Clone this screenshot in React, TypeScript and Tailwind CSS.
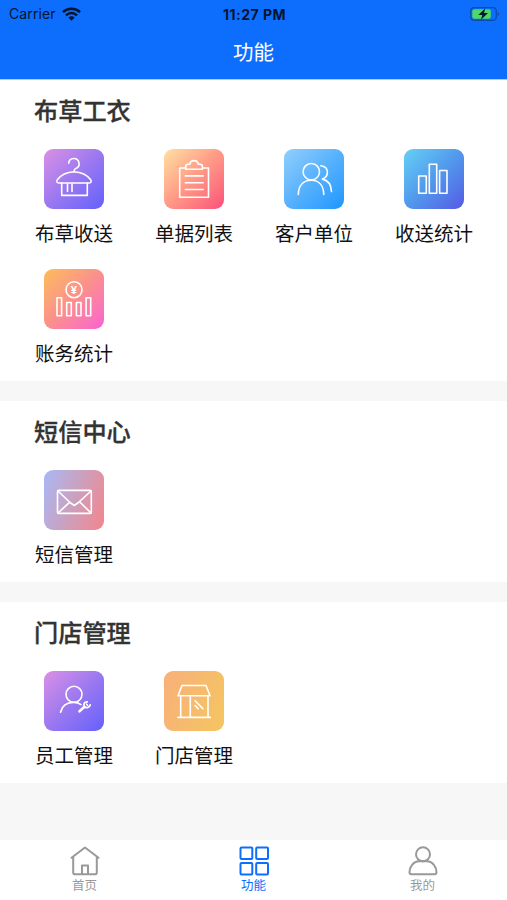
import React from 'react';

interface MenuItem {
  label: string;
  tile: string;
  icon: React.ReactNode;
}

interface MenuSection {
  title: string;
  items: MenuItem[];
}

const HangerIcon = () => (
  <>
    <path d="M24.7 14.2a5.2 5.2 0 1 1 7 5.4c-1.2.5-1.7 1-1.7 3.1" />
    <path d="M30 22.7c-7.5.3-13.5 3.7-16.7 8.1-1 1.6-.4 3.2 1.4 3.2h30.6c1.8 0 2.4-1.6 1.4-3.2C43.5 26.4 37.5 23 30 22.7Z" />
    <path d="M17.7 34v12.4h25.6V34M23.5 35v7.5M28 35v7.5" />
  </>
);

const ClipboardIcon = () => (
  <>
    <path d="M21.5 19H15.7v29.2h28.8V19h-5.8" />
    <path d="M21.7 20.2v-2.5c0-1.6 1-2.4 2.5-2.4h1.5c.4-2.3 2-3.7 4.3-3.7s3.9 1.4 4.3 3.7h1.6c1.5 0 2.5.8 2.5 2.4v2.5Z" />
    <path d="M21.3 26.9h17.9M21.3 33.7h17.9M21.3 40.5h17.9" />
  </>
);

const CustomersIcon = () => (
  <>
    <circle cx="27.3" cy="22.7" r="8.2" />
    <path d="M14.3 45.5c.2-9 5-14.3 13-14.3S39.6 37 39.8 45.5" />
    <path d="M36.8 16.7c4 .5 6.6 3 6.6 6.5 0 3.3-1.7 5.600-5 6.9 5.8 1.3 8.9 6 9.1 12.500" />
  </>
);

const BarsIcon = () => (
  <>
    <rect x="14.7" y="27" width="7.6" height="17.3" />
    <rect x="25.3" y="15.3" width="7.4" height="29" />
    <rect x="35.6" y="21.5" width="7.4" height="22.8" />
  </>
);

const FinanceIcon = () => (
  <>
    <circle cx="30" cy="20.7" r="8" />
    <text x="30" y="24.6" fontSize="11" fontWeight="700" textAnchor="middle" fill="white" stroke="none">¥</text>
    <rect x="13" y="28.7" width="4.6" height="18" />
    <rect x="22.7" y="33.5" width="4.6" height="13.2" />
    <rect x="32.4" y="33.5" width="4.6" height="13.2" />
    <rect x="42.1" y="28.7" width="4.6" height="18" />
  </>
);

const MailIcon = () => (
  <>
    <rect x="13.5" y="20.4" width="33.8" height="23" rx="1.2" />
    <path d="m14 21 12 11.500 4.300 3 4.200-3L47 21M14 43l11-10.200M47 43 35.800 32" />
  </>
);

const StaffIcon = () => (
  <>
    <circle cx="30" cy="23.3" r="8" />
    <path d="M16.500 41.300c1.500-6.600 6.400-9.900 13.300-9.900 2.900 0 5 .6 7.200 2.200" />
    <path d="m35.500 40.300 5-4.500" strokeWidth="2.600" />
    <path d="M43.200 30.900c-2.700-.1-4 1.900-3 4.500 1.700 2.200 5.200 1.300 6-1.500" strokeWidth="1.800" />
    <path d="m42.600 33.200.9 1" />
  </>
);

const ShopIcon = () => (
  <>
    <path d="M18 14.5h24l4 10.300H14Z" />
    <path d="M16.7 24.8v21.400M44 24.8v21.400M14 46.400h32.300M26.300 24.800v21.400" />
    <path d="m31 29.800 8 8M31 34.500l3.200 3.200" />
  </>
);

const sections: MenuSection[] = [
  {
    title: '布草工衣',
    items: [
      { label: '布草收送', tile: 'bg-linear-135 from-[#dc8fe5] via-[#9b78f0] to-[#655ffb]', icon: <HangerIcon /> },
      { label: '单据列表', tile: 'bg-linear-135 from-[#ffe0a2] via-[#ff9886] to-[#fb4d7b]', icon: <ClipboardIcon /> },
      { label: '客户单位', tile: 'bg-linear-135 from-[#91cffc] via-[#56b1fd] to-[#1597ff]', icon: <CustomersIcon /> },
      { label: '收送统计', tile: 'bg-linear-135 from-[#66d1f5] via-[#5298ec] to-[#5558e5]', icon: <BarsIcon /> },
      { label: '账务统计', tile: 'bg-linear-135 from-[#fbbd55] via-[#fb8f8c] to-[#fa5fd0]', icon: <FinanceIcon /> },
    ],
  },
  {
    title: '短信中心',
    items: [
      { label: '短信管理', tile: 'bg-linear-110 from-[#a7b8f7] via-[#cba0bd] to-[#f3838b]', icon: <MailIcon /> },
    ],
  },
  {
    title: '门店管理',
    items: [
      { label: '员工管理', tile: 'bg-linear-135 from-[#dc8fe5] via-[#9b78f0] to-[#655ffb]', icon: <StaffIcon /> },
      { label: '门店管理', tile: 'bg-linear-110 from-[#f8b079] to-[#f4c560]', icon: <ShopIcon /> },
    ],
  },
];

const StatusBar: React.FC = () => (
  <div className="grid grid-cols-3 items-center h-[27px] pl-[9px] pr-[7px] text-[#03142e]">
    <div className="flex items-center gap-[6px]">
      <span className="text-[14px] tracking-[0.1px]">Carrier</span>
      <svg className="w-[19px] h-[14px]" viewBox="0 0 19 14" fill="none" stroke="currentColor" strokeWidth="2.5">
        <path d="M1 5.2C5.7.7 13.3.7 18 5.2M4 8.3c3.2-3 7.800-3 11 0" />
        <path d="M6.3 10.6c1.9-1.7 4.5-1.7 6.4 0L9.5 13.8Z" fill="currentColor" stroke="none" />
      </svg>
    </div>
    <span className="pt-px text-center text-[14px] tracking-[0.5px] font-bold whitespace-nowrap">11:27 PM</span>
    <svg className="w-[30px] h-[14px] justify-self-end" viewBox="0 0 30 14">
      <rect x="0.7" y="0.7" width="25.6" height="12.6" rx="3.5" fill="none" stroke="#0b4aaa" strokeWidth="1.2" />
      <rect x="2.3" y="2.3" width="18.5" height="9.4" rx="2" fill="#4cd964" />
      <path d="M27.8 5v4.2c1.5-.7 1.5-3.500 0-4.200Z" fill="#0b4aaa" />
      <path d="m15.3 1.300-7 6.800h4l-1.300 4.700 7-6.800h-4Z" fill="#03142e" />
    </svg>
  </div>
);

const MenuTile: React.FC<{ item: MenuItem }> = ({ item }) => (
  <button className="flex flex-col items-center h-[120px] pt-2">
    <span className={`block size-[60px] rounded-[9px] ${item.tile}`}>
      <svg className="size-[60px]" viewBox="0 0 60 60" fill="none" stroke="white" strokeWidth="1.6" strokeLinecap="round" strokeLinejoin="round">
        {item.icon}
      </svg>
    </span>
    <span className="mt-[11px] text-[19.5px] leading-7 text-[#111] whitespace-nowrap">{item.label}</span>
  </button>
);

const tabs = [
  {
    label: '首页',
    active: false,
    icon: (
      <>
        <path d="M1.5 11.8 15 1.5l13.5 10.300M3.200 10.700v15.700c0 1.200.6 1.800 1.800 1.800h20c1.200 0 1.800-.6 1.800-1.800V10.700" />
        <path d="M12 28v-8.500h6V28" />
      </>
    ),
  },
  {
    label: '功能',
    active: true,
    icon: (
      <>
        <rect x="1.5" y="1.5" width="11.8" height="11.5" rx="1" />
        <rect x="17.2" y="1.5" width="11.8" height="11.5" rx="1" />
        <rect x="1.5" y="17" width="11.8" height="11.5" rx="1" />
        <rect x="17.2" y="17" width="11.8" height="11.5" rx="1" />
      </>
    ),
  },
  {
    label: '我的',
    active: false,
    icon: (
      <>
        <circle cx="15" cy="8.3" r="7" />
        <path d="M10.800 15.300h8.400c5 0 9.300 5.200 9.300 11 0 1.500-.5 2-2 2h-23c-1.500 0-2-.5-2-2 0-5.800 4.300-11 9.300-11Z" />
      </>
    ),
  },
];

const App: React.FC = () => {
  return (
    <div className="flex flex-col h-[900px] w-[507px] overflow-hidden bg-[#f7f7f7] font-['Inter','Noto_Sans_CJK_SC',sans-serif]">
      <header className="h-[80px] shrink-0 bg-[#0d6efd] border-b border-[#9fd0ff]">
        <StatusBar />
        <h1 className="text-center text-[20.5px] leading-[52px] text-white">功能</h1>
      </header>

      <main className="flex flex-col flex-1 gap-5">
        {sections.map((section) => (
          <section key={section.title} className="bg-white">
            <h2 className="h-[61px] pl-[34px] text-[24.2px] leading-[64px] font-medium text-[#333] [-webkit-text-stroke:0.3px_#333]">
              {section.title}
            </h2>
            <div className="grid grid-cols-4 pl-[14px] pr-[13px]">
              {section.items.map((item) => (
                <MenuTile key={item.label} item={item} />
              ))}
            </div>
          </section>
        ))}
      </main>

      <nav className="grid grid-cols-3 h-[60px] shrink-0 bg-white">
        {tabs.map((tab) => (
          <button
            key={tab.label}
            className={`flex flex-col items-center pt-[6px] ${tab.active ? 'text-[#0d6efd]' : 'text-[#999]'}`}
          >
            <svg className="size-[30px]" viewBox="0 0 30 30" fill="none" stroke="currentColor" strokeWidth="2" strokeLinecap="round" strokeLinejoin="round">
              {tab.icon}
            </svg>
            <span className="text-[12.5px] leading-5">{tab.label}</span>
          </button>
        ))}
      </nav>
    </div>
  );
};

export default App;
